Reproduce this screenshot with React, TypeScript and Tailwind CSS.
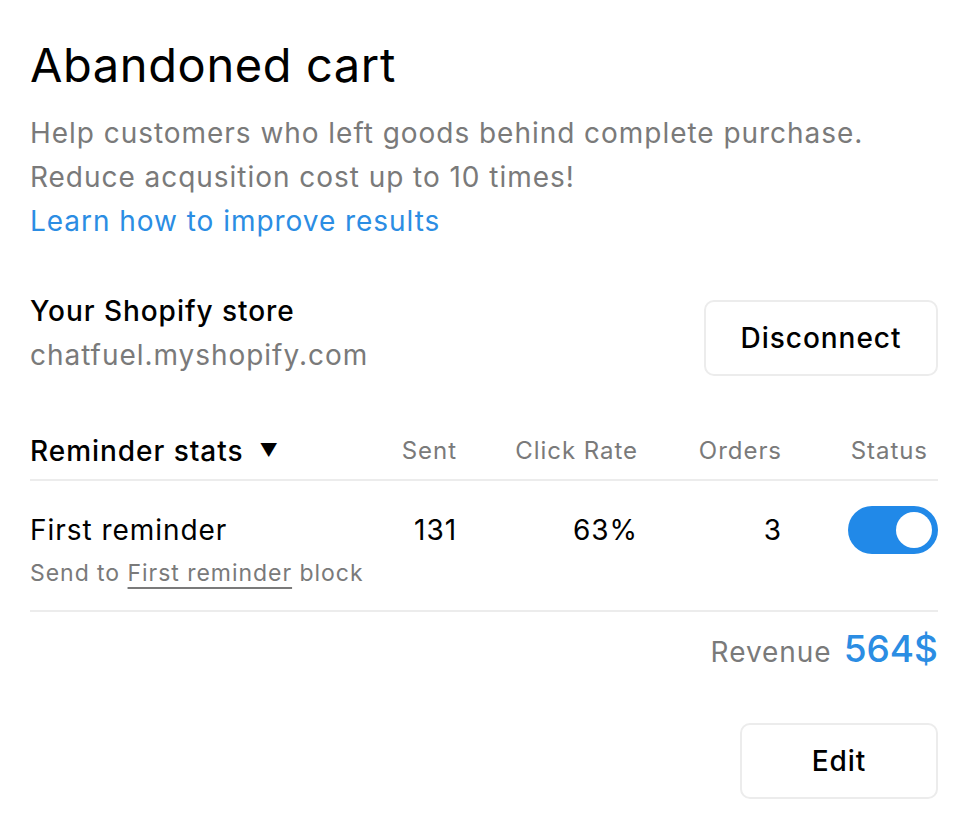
import React from "react";

const cols = "grid grid-cols-[1fr_100px_181px_144px_156px] items-center";

const App = () => {
    const [enabled, setEnabled] = React.useState(true);
    return (
        <div className="w-[968px] h-[836px] bg-white px-[30px] pt-[37px] font-['Inter',sans-serif] text-[#000] tracking-[0.06em]">
            <p className="text-[47px] leading-[56px] tracking-[0.6px]">Abandoned cart</p>
            <div className="mt-[18px] text-[28px] leading-[44px] text-[#7a7a7a]">
                <p>Help customers who left goods behind complete purchase.</p>
                <p>Reduce acqusition cost up to 10 times!</p>
                <a href="#" className="text-[#2b8de3]">Learn how to improve results</a>
            </div>

            <div className="mt-[46px] flex items-center justify-between">
                <div className="flex flex-col">
                    <p className="text-[28px] leading-[44px] font-medium">Your Shopify store</p>
                    <p className="text-[28px] leading-[44px] text-[#7a7a7a]">chatfuel.myshopify.com</p>
                </div>
                <button className="mt-[10px] w-[234px] h-[76px] border-2 border-[#ececec] rounded-[10px] text-[28px] font-medium">Disconnect</button>
            </div>

            <div className={`${cols} mt-[52px] pb-[6px] border-b-2 border-[#ececec]`}>
                <div className="flex items-center gap-x-4 text-[28px] font-medium leading-[44px]">
                    Reminder stats
                    <span className="text-[18px]">▼</span>
                </div>
                <p className="text-right text-[24px] text-[#7a7a7a]">Sent</p>
                <p className="text-right text-[24px] text-[#7a7a7a]">Click Rate</p>
                <p className="text-right text-[24px] text-[#7a7a7a]">Orders</p>
                <p className="text-right pr-[10px] text-[24px] text-[#7a7a7a]">Status</p>
            </div>

            <div className="pt-[25px] pb-[18px] border-b-2 border-[#ececec]">
                <div className={cols}>
                    <p className="text-[28px] leading-[44px]">First reminder</p>
                    <p className="text-right text-[28px]">131</p>
                    <p className="text-right text-[28px]">63%</p>
                    <p className="text-right text-[28px]">3</p>
                    <div className="flex justify-end">
                        <button
                            onClick={() => setEnabled(!enabled)}
                            className={`w-[90px] h-[48px] rounded-full p-[6px] flex ${enabled ? "bg-[#2189e8] justify-end" : "bg-[#d5d5d5] justify-start"}`}
                        >
                            <span className="w-[36px] h-[36px] rounded-full bg-white" />
                        </button>
                    </div>
                </div>
                <p className="text-[23px] leading-[38px] text-[#7a7a7a]">
                    Send to <span className="underline underline-offset-[6px] decoration-[#7a7a7a]">First reminder</span> block
                </p>
            </div>

            <div className="mt-[9px] flex items-baseline justify-end gap-x-3">
                <span className="text-[28px] text-[#7a7a7a]">Revenue</span>
                <span className="text-[37px] font-medium text-[#2b8de3] tracking-normal">564$</span>
            </div>

            <div className="mt-[46px] flex justify-end">
                <button className="w-[198px] h-[76px] border-2 border-[#ececec] rounded-[10px] text-[28px] font-medium">Edit</button>
            </div>
        </div>
    );
};

export default App;
